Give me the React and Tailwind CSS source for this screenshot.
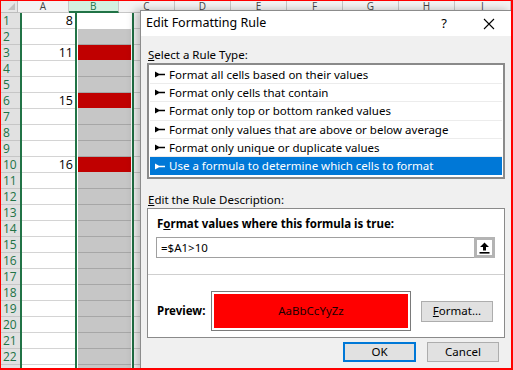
import React from 'react'

const values = { 1: '8', 3: '11', 6: '15', 10: '16' }
const redRows = [3, 6, 10]
const rows = Array.from({ length: 23 }, (_, i) => i + 1)
const cols = ['C', 'D', 'E', 'F', 'G', 'H', 'I']

const rules = [
    'Format all cells based on their values',
    'Format only cells that contain',
    'Format only top or bottom ranked values',
    'Format only values that are above or below average',
    'Format only unique or duplicate values',
    'Use a formula to determine which cells to format',
]

const Bullet = ({ color }) => (
    <svg width="10" height="7" viewBox="0 0 10 7" className="shrink-0">
        <path d="M0 0.5 L4 2.8 L10 2.8 L10 4.2 L4 4.2 L0 6.5 Z" fill={color} />
    </svg>
)

const Sheet = () => (
    <div className="flex flex-col font-['Open_Sans',sans-serif]">
        <div className="flex h-[12px] text-[10px] leading-[10px] text-[#444]">
            <div className="w-[19px] bg-[#e6e6e6] border-r border-b border-[#bdbdbd] relative">
                <div className="absolute right-[2px] bottom-[2px] w-0 h-0 border-l-[7px] border-l-transparent border-b-[7px] border-b-[#c0c0c0]" />
            </div>
            <div className="w-[56px] bg-[#f3f3f3] border-r border-b border-[#c6c6c6] text-center">A</div>
            <div className="w-[56px] bg-[#d3f0e0] border-r border-[#c6c6c6] border-b-2 border-b-[#217346] text-center text-[#217346]">B</div>
            {cols.map(c => (
                <div key={c} className="w-[56px] shrink-0 bg-[#f3f3f3] border-r border-b border-[#c6c6c6] text-center">{c}</div>
            ))}
        </div>
        {rows.map(r => (
            <div key={r} className="flex h-[16px]">
                <div className="w-[19px] shrink-0 bg-[#e1e1e1] border-b border-[#c6c6c6] text-[12px] leading-[15px] text-[#217346] pl-[2px]">{r < 23 ? r : ''}</div>
                <div className="w-[55px] shrink-0 border-l-2 border-[#217346] bg-white">
                    <div className="h-full border-b border-[#d4d4d4] text-right pr-[2px] text-[12.5px] leading-[15px] text-black">{values[r]}</div>
                </div>
                <div className="w-[59px] shrink-0 border-x-2 border-[#217346] bg-white px-[1px]">
                    <div className={`h-full border-b ${r === 1 ? 'bg-white border-white' : redRows.includes(r) ? 'bg-[#c00000] border-[#c6c6c6]' : 'bg-[#c6c6c6] border-[#a6a6a6]'}`} />
                </div>
                <div className="w-[56px] shrink-0 bg-white border-r border-b border-[#d4d4d4]" />
            </div>
        ))}
    </div>
)

const Dialog = () => (
    <div className="absolute left-[139px] top-[9px] w-[372px] h-[362px] border border-[#8c8c8c] bg-[#f0f0f0] flex flex-col font-['Noto_Sans',sans-serif] text-[11.5px] text-black shadow-[-5px_0_8px_rgba(0,0,0,0.25)]">
        <div className="h-[25px] bg-white flex items-center pl-[5px] pr-[16px]">
            <span className="flex-1 text-[12.5px]">Edit Formatting Rule</span>
            <span className="text-[13px] mr-[36px]">?</span>
            <svg width="12" height="12" viewBox="0 0 12 12">
                <path d="M1 1 L11 11 M11 1 L1 11" stroke="#000" strokeWidth="1.1" />
            </svg>
        </div>
        <div className="flex flex-col px-[6px]">
            <div className="mt-[12px] pl-[1px] leading-[14px]"><span className="underline">S</span>elect a Rule Type:</div>
            <div className="mt-[1px] h-[116px] bg-white border-2 border-[#8a8a8a] px-[1px] pt-[1px]">
                {rules.map((rule, i) => {
                    const sel = i === rules.length - 1
                    return (
                        <div
                            key={rule}
                            className={`h-[18.2px] flex items-center gap-[4px] pl-[5px] ${sel ? 'bg-[#0078d7] text-white' : 'border-b border-[#ececec]'}`}
                        >
                            <Bullet color={sel ? '#fff' : '#000'} />
                            <span>{rule}</span>
                        </div>
                    )
                })}
            </div>
            <div className="mt-[14px] pl-[1px] leading-[14px]"><span className="underline">E</span>dit the Rule Description:</div>
            <div className="mt-[1px] h-[130px] bg-white border border-[#8a8a8a] flex flex-col">
                <div className="mt-[8px] pl-[9px] leading-[14px] font-bold">F<span className="underline">o</span>rmat values where this formula is true:</div>
                <div className="mt-[6px] ml-[8px] mr-[9px] h-[21px] border border-[#a0a0a0] flex items-center">
                    <span className="flex-1 pl-[4px]">=$A1&gt;10</span>
                    <div className="w-[21px] h-[21px] -mr-px border-[3px] border-[#b4b4b4] bg-white flex items-center justify-center">
                        <svg width="11" height="12" viewBox="0 0 11 12">
                            <path d="M5.5 0.5 L10 5 L7 5 L7 8.5 L4 8.5 L4 5 L1 5 Z" fill="#000" />
                            <rect x="0.5" y="10" width="10" height="1.6" fill="#000" />
                        </svg>
                    </div>
                </div>
                <div className="mt-[16px] h-px bg-[#cfcfcf]" />
                <div className="mt-[16px] flex items-center">
                    <span className="w-[63px] pl-[9px] font-bold">Preview:</span>
                    <div className="w-[200px] h-[40px] border border-[#7a7a7a] p-[2px]">
                        <div className="h-full bg-[#ff0000] flex items-center justify-center text-[#1a0000] text-[11.5px]">AaBbCcYyZz</div>
                    </div>
                    <button className="ml-[10px] w-[72px] h-[21px] bg-[#e1e1e1] border border-[#adadad] text-[11.5px]">
                        <span className="underline">F</span>ormat...
                    </button>
                </div>
            </div>
            <div className="mt-[4px] flex justify-end gap-[11px] pr-[6px]">
                <button className="w-[73px] h-[20px] bg-[#e1e1e1] border-2 border-[#0078d7] text-[11.5px] leading-none">OK</button>
                <button className="w-[72px] h-[20px] bg-[#e1e1e1] border border-[#adadad] text-[11.5px] leading-none">Cancel</button>
            </div>
        </div>
    </div>
)

export default function App() {
    return (
        <div className="relative w-[513px] h-[370px] overflow-hidden bg-white border-t border-l border-r-2 border-b-2 border-[#ff0000]">
            <Sheet />
            <Dialog />
        </div>
    )
}
